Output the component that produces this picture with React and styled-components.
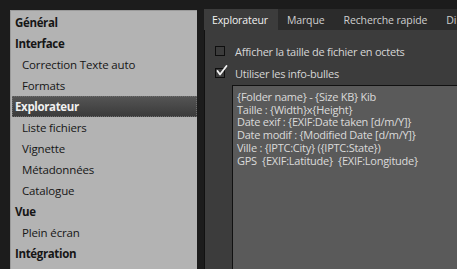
import React from "react";
import styled, { createGlobalStyle } from "styled-components";

const Global = createGlobalStyle`
  html, body { margin: 0; padding: 0; background: #1c1c1c; overflow: hidden; }
  body { font-family: "Open Sans", "Noto Sans", sans-serif; }
`;

const Page = styled.div`
  display: flex;
  width: 457px;
  height: 269px;
  padding: 9px 0 0 10px;
  box-sizing: border-box;
  gap: 7px;
  overflow: hidden;
`;

const Sidebar = styled.ul`
  list-style: none;
  margin: 1px 0 0 0;
  padding: 1px 0 0 0;
  width: 187px;
  flex: none;
  background: #b3b3b3;
  border-top: 1px solid #9a9a9a;
  border-left: 1px solid #9a9a9a;
  box-sizing: border-box;
`;

const Item = styled.li`
  height: 21px;
  display: flex;
  align-items: center;
  padding-left: ${(p) => (p.$sub ? 10 : 3)}px;
  margin-left: 1px;
  font-size: 11.5px;
  font-weight: ${(p) => (p.$sub ? 400 : 700)};
  letter-spacing: ${(p) => (p.$sub ? "-0.15px" : "-0.35px")};
  color: ${(p) => (p.$active ? "#f0f0f0" : "#161616")};
  background: ${(p) =>
    p.$active ? "linear-gradient(#555555, #3a3a3a)" : "transparent"};
  outline: ${(p) => (p.$active ? "1px dotted #6e6e6e" : "none")};
  outline-offset: -1px;
  white-space: nowrap;
`;

const Main = styled.div`
  flex: 1;
  display: flex;
  flex-direction: column;
  min-width: 0;
`;

const TabBar = styled.div`
  display: flex;
  height: 21px;
  background: #2b2b2b;
  flex: none;
  overflow: hidden;
`;

const Tab = styled.div`
  display: flex;
  align-items: center;
  flex: none;
  padding: ${(p) => (p.$active ? "0 10px 0 8px" : "0 10px 0 9px")};
  font-size: 10.5px;
  letter-spacing: -0.12px;
  color: ${(p) => (p.$active ? "#f2f2f2" : "#cfcfcf")};
  background: ${(p) => (p.$active ? "#3c3c3c" : "transparent")};
  white-space: nowrap;
`;

const Panel = styled.div`
  flex: 1;
  background: #3c3c3c;
  border-left: 1px solid #111;
  padding: 10px 0 0 10px;
  display: flex;
  flex-direction: column;
  min-height: 0;
`;

const Row = styled.div`
  display: flex;
  align-items: center;
  height: 22px;
  gap: 10px;
`;

const Box = styled.span`
  position: relative;
  width: 10px;
  height: 10px;
  box-sizing: border-box;
  border: 1px solid #0e0e0e;
  background: #3c3c3c;
  flex: none;
`;

const Check = styled.svg`
  position: absolute;
  left: 1px;
  top: -3px;
  overflow: visible;
`;

const Label = styled.span`
  font-size: 11px;
  letter-spacing: -0.25px;
  color: #d6d6d6;
  white-space: nowrap;
`;

const TextBox = styled.div`
  margin: 1px 0 0 17px;
  flex: 1;
  background: #5a5a5a;
  border-top: 1px solid #111;
  border-left: 1px solid #111;
  padding: 5px 0 0 4px;
  font-size: 11px;
  line-height: 12.7px;
  letter-spacing: -0.25px;
  color: #dadada;
  white-space: pre;
`;

const items = [
  { t: "Général" },
  { t: "Interface" },
  { t: "Correction Texte auto", sub: true },
  { t: "Formats", sub: true },
  { t: "Explorateur", active: true },
  { t: "Liste fichiers", sub: true },
  { t: "Vignette", sub: true },
  { t: "Métadonnées", sub: true },
  { t: "Catalogue", sub: true },
  { t: "Vue" },
  { t: "Plein écran", sub: true },
  { t: "Intégration" },
];

const lines = [
  "{Folder name} - {Size KB} Kib",
  "Taille : {Width}x{Height}",
  "Date exif : {EXIF:Date taken [d/m/Y]}",
  "Date modif : {Modified Date [d/m/Y]}",
  "Ville : {IPTC:City} ({IPTC:State})",
  "GPS  {EXIF:Latitude}  {EXIF:Longitude}",
];

export default function App() {
  return (
    <>
      <Global />
      <Page>
        <Sidebar>
          {items.map((it) => (
            <Item key={it.t} $sub={it.sub} $active={it.active}>
              {it.t}
            </Item>
          ))}
        </Sidebar>
        <Main>
          <TabBar>
            <Tab $active>Explorateur</Tab>
            <Tab>Marque</Tab>
            <Tab>Recherche rapide</Tab>
            <Tab>Di</Tab>
          </TabBar>
          <Panel>
            <Row>
              <Box />
              <Label>Afficher la taille de fichier en octets</Label>
            </Row>
            <Row>
              <Box>
                <Check width="11" height="11" viewBox="0 0 11 11">
                  <path
                    d="M0.5 5 L3 8.5 L9.5 0"
                    fill="none"
                    stroke="#f4f4f4"
                    strokeWidth="1.8"
                    strokeLinecap="round"
                    strokeLinejoin="round"
                  />
                </Check>
              </Box>
              <Label>Utiliser les info-bulles</Label>
            </Row>
            <TextBox>{lines.join("\n")}</TextBox>
          </Panel>
        </Main>
      </Page>
    </>
  );
}
